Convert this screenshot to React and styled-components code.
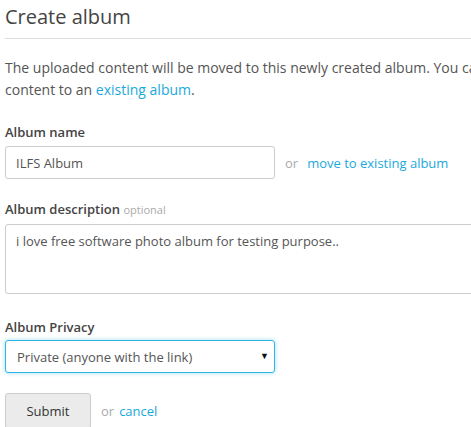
import React from 'react'
import styled, { createGlobalStyle } from 'styled-components'

const GlobalStyle = createGlobalStyle`
    html, body {
        margin: 0;
        padding: 0;
        background: #fff;
        overflow: hidden;
    }
    body {
        font-family: "Open Sans", "Liberation Sans", sans-serif;
        color: #555;
    }
`

const Page = styled.div`
    width: 600px;
    padding: 0 5px;
`

const Title = styled.h1`
    margin: 0;
    padding: 4px 0 8px;
    font-size: 20px;
    font-weight: 400;
    line-height: 26px;
    color: #444;
    border-bottom: 1px solid #ddd;
`

const Intro = styled.p`
    margin: 18px 0 22px;
    font-size: 14px;
    line-height: 22px;
    color: #555;
`

const Link = styled.a`
    color: #1aa9dc;
    font-size: inherit;
    text-decoration: none;
    cursor: pointer;
`

const Field = styled.div`
    margin-bottom: ${props => props.gap || 20}px;
`

const Label = styled.label`
    display: block;
    margin-bottom: ${props => props.space || 5}px;
    font-size: 13px;
    font-weight: 600;
    line-height: 18px;
    color: #444;
`

const Hint = styled.span`
    font-size: 11px;
    font-weight: 400;
    color: #aaa;
`

const Row = styled.div`
    display: flex;
    align-items: center;
    font-size: 13px;
`

const Input = styled.input`
    box-sizing: border-box;
    width: 270px;
    height: 33px;
    padding: 0 10px;
    border: 1px solid #ccc;
    border-radius: 3px;
    font-family: inherit;
    font-size: 13px;
    color: #555;
    outline: none;
`

const Or = styled.span`
    margin: 0 9px 0 10px;
    color: #aaa;
`

const TextArea = styled.textarea`
    display: block;
    box-sizing: border-box;
    width: 100%;
    height: 70px;
    padding: 7px 10px;
    border: 1px solid #ccc;
    border-radius: 3px;
    font-family: inherit;
    font-size: 13px;
    line-height: 18px;
    color: #555;
    resize: none;
    outline: none;
`

const SelectBox = styled.div`
    position: relative;
    box-sizing: border-box;
    width: 270px;
    height: 33px;
    border: 1px solid #2cb5e2;
    border-radius: 3px;
    box-shadow: 0 0 4px rgba(44, 181, 226, 0.45);
    display: flex;
    align-items: center;
    padding: 0 11px;
    font-size: 13px;
    color: #555;
`

const Caret = styled.span`
    position: absolute;
    right: 5px;
    top: 8px;
    font-size: 9px;
    color: #111;
`

const Actions = styled.div`
    display: flex;
    align-items: center;
    font-size: 13px;
`

const Button = styled.button`
    box-sizing: border-box;
    width: 86px;
    height: 36px;
    border: 1px solid #ccc;
    border-radius: 3px;
    background: #ebebeb;
    font-family: inherit;
    font-size: 13px;
    font-weight: 400;
    color: #333;
    cursor: pointer;
`

const ActionOr = styled.span`
    margin: 0 5px 0 10px;
    color: #aaa;
`

const CreateAlbum = () => {
    return (
        <Page>
            <Title>Create album</Title>
            <Intro>
                The uploaded content will be moved to this newly created album. You can also move the
                content to an <Link>existing album</Link>.
            </Intro>
            <Field gap={21}>
                <Label>Album name</Label>
                <Row>
                    <Input defaultValue="ILFS Album" />
                    <Or>or</Or>
                    <Link>move to existing album</Link>
                </Row>
            </Field>
            <Field gap={24}>
                <Label>Album description <Hint>optional</Hint></Label>
                <TextArea defaultValue="i love free software photo album for testing purpose.." />
            </Field>
            <Field gap={20}>
                <Label space={4}>Album Privacy</Label>
                <SelectBox>
                    Private (anyone with the link)
                    <Caret>▼</Caret>
                </SelectBox>
            </Field>
            <Actions>
                <Button>Submit</Button>
                <ActionOr>or</ActionOr>
                <Link>cancel</Link>
            </Actions>
        </Page>
    )
}

export default function App() {
    return (
        <>
            <GlobalStyle />
            <CreateAlbum />
        </>
    )
}
